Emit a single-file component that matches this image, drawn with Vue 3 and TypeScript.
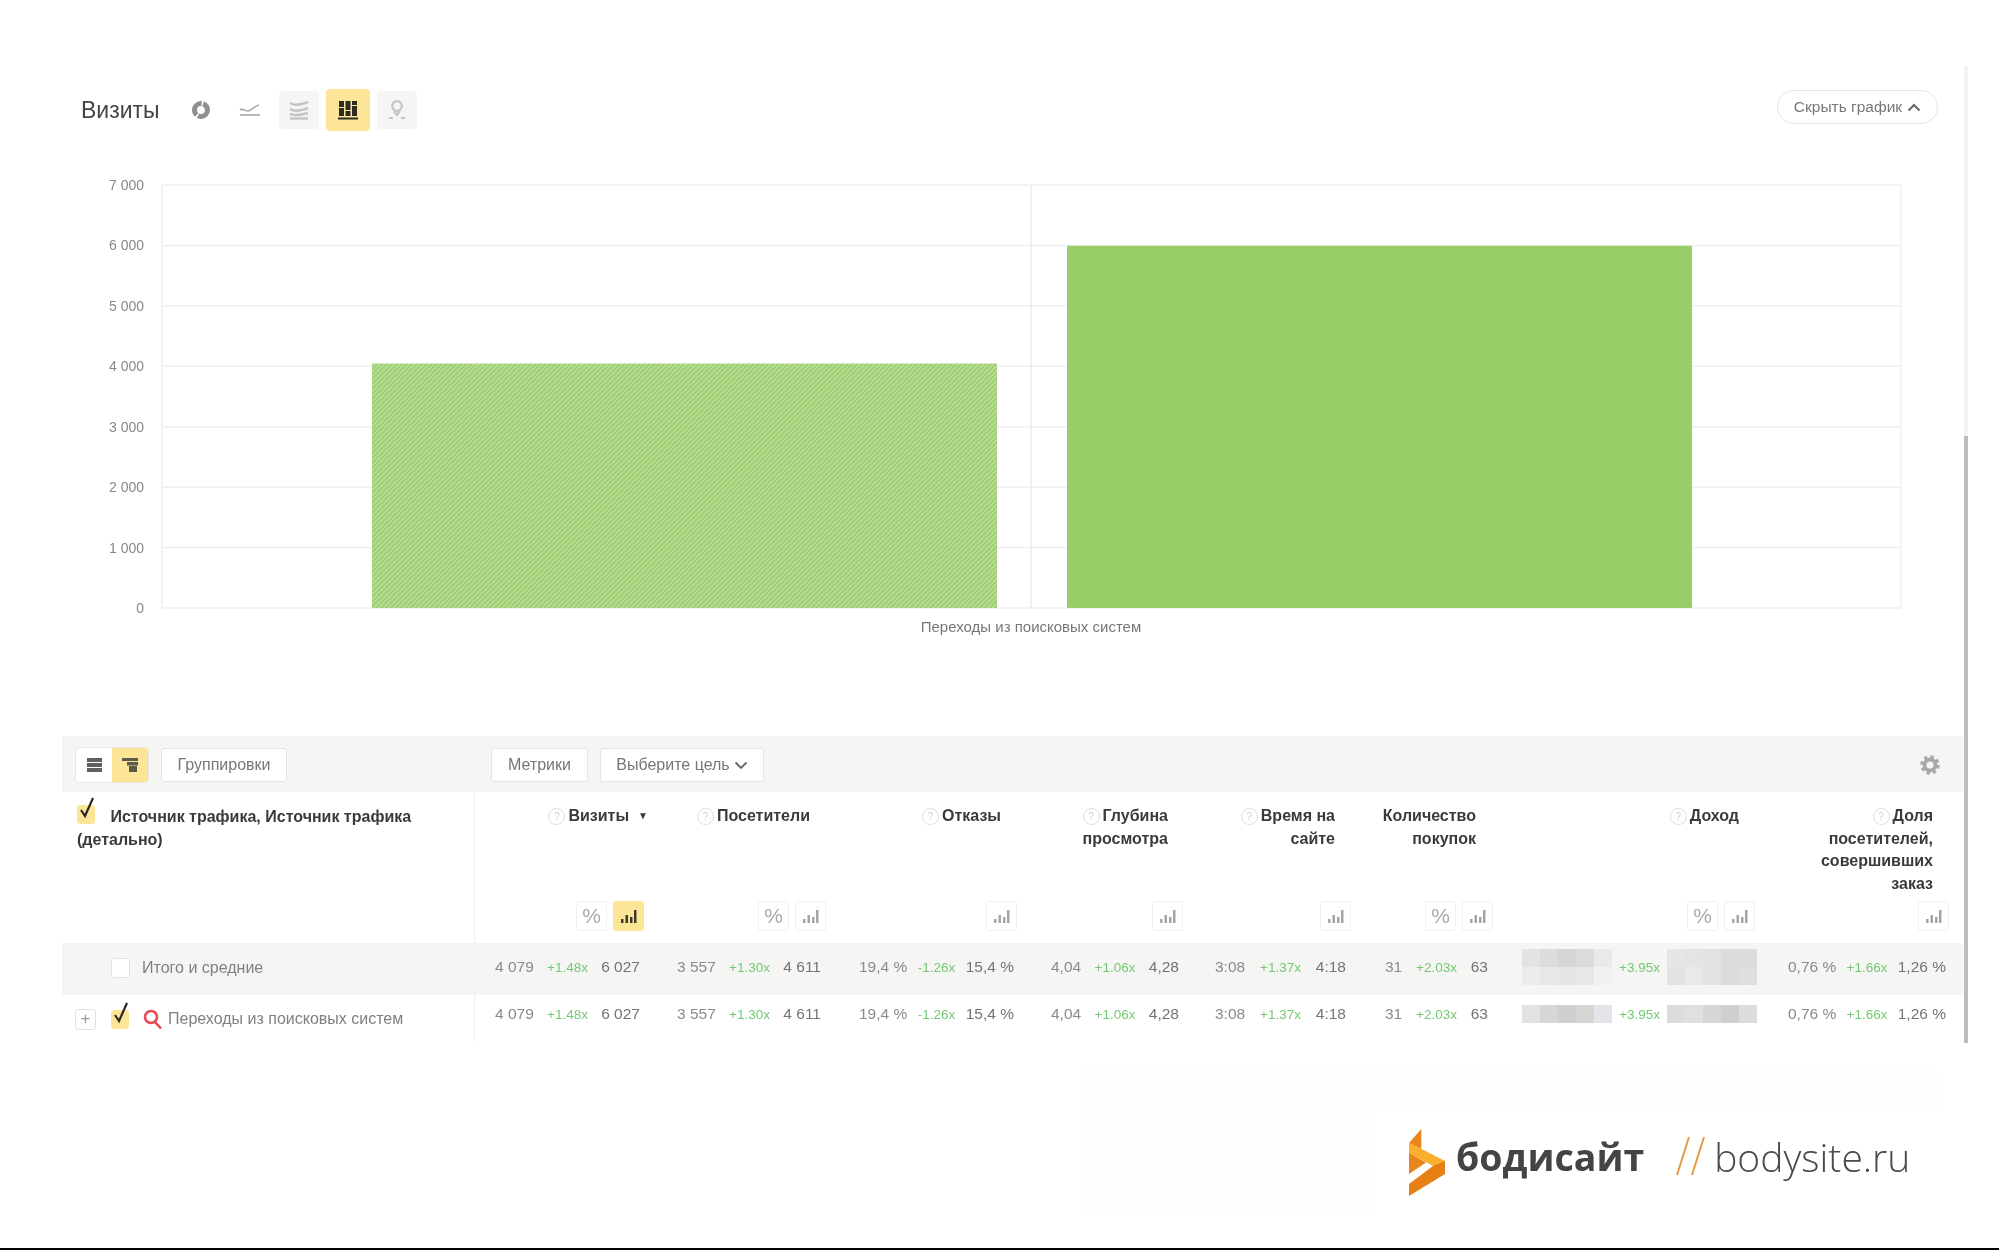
<script setup lang="ts">
interface Metric {
  lines: string[]
  hint: boolean
  sorted?: boolean
  percent: boolean
  active?: boolean
  titlePad: number
  btnPad: number
  padL: number
  padR: number
  from: string
  delta: string
  to: string
  mosaic?: boolean
}

const ticks = [7000, 6000, 5000, 4000, 3000, 2000, 1000, 0]
const tickStep = 60.43
const zeroY = 608

const yOf = (v: number) => zeroY - (v / 1000) * tickStep
const barY = (v: number) => yOf(v) + 2
const fmt = (v: number) => (v >= 1000 ? `${Math.floor(v / 1000)} 000` : '0')

const metrics: Metric[] = [
  { lines: ['Визиты'], hint: true, sorted: true, percent: true, active: true, titlePad: 2, btnPad: 6, padL: 20, padR: 10, from: '4 079', delta: '+1.48x', to: '6 027' },
  { lines: ['Посетители'], hint: true, percent: true, titlePad: 21, btnPad: 5, padL: 27, padR: 10, from: '3 557', delta: '+1.30x', to: '4 611' },
  { lines: ['Отказы'], hint: true, percent: false, titlePad: 23, btnPad: 7, padL: 28, padR: 10, from: '19,4 %', delta: '-1.26x', to: '15,4 %' },
  { lines: ['Глубина', 'просмотра'], hint: true, percent: false, titlePad: 21, btnPad: 6, padL: 27, padR: 10, from: '4,04', delta: '+1.06x', to: '4,28' },
  { lines: ['Время на', 'сайте'], hint: true, percent: false, titlePad: 21, btnPad: 5, padL: 26, padR: 10, from: '3:08', delta: '+1.37x', to: '4:18' },
  { lines: ['Количество', 'покупок'], hint: false, percent: true, titlePad: 22, btnPad: 5, padL: 29, padR: 10, from: '31', delta: '+2.03x', to: '63' },
  { lines: ['Доход'], hint: true, percent: true, titlePad: 28, btnPad: 12, padL: 24, padR: 10, from: '', delta: '+3.95x', to: '', mosaic: true },
  { lines: ['Доля', 'посетителей,', 'совершивших', 'заказ'], hint: true, percent: false, titlePad: 30, btnPad: 14, padL: 21, padR: 17, from: '0,76 %', delta: '+1.66x', to: '1,26 %' },
]

const rows = [
  { total: true, mosaicA: ['#e3e3e3', '#dcdcdc', '#d5d5d5', '#dbdbdb', '#e9e9e9', '#ececec', '#e7e7e7', '#e5e5e5', '#e7e7e7', '#f1f1f1'], mosaicB: ['#e6e6e6', '#e4e4e4', '#e2e2e2', '#dcdcdc', '#dddddd', '#e2e2e2', '#e9e9e9', '#e3e3e3', '#dcdcdc', '#dedede'] },
  { total: false, mosaicA: ['#e2e2e2', '#d6d6d6', '#cfcfcf', '#d5d5d5', '#e4e4ea'], mosaicB: ['#dcdcdc', '#e0e0e0', '#d6d6d6', '#cfcfcf', '#dddddd'] },
]
</script>

<template>
  <div class="page">
    <header class="head">
      <h1 class="title">Визиты</h1>
      <span class="chart-type">
        <svg width="20" height="20" viewBox="0 0 20 20"><circle cx="10" cy="10" r="6.5" fill="none" stroke="#8f8f8f" stroke-width="5" stroke-dasharray="13 1.5 16 1.5 9 1" /></svg>
      </span>
      <span class="chart-type">
        <svg width="22" height="16" viewBox="0 0 22 16" fill="none" stroke="#a8a8a8" stroke-width="1.6"><path d="M1 8c3-2 5 1 8 1s6-5 11-6" /><path d="M1 13h20" /></svg>
      </span>
      <span class="chart-type boxed">
        <svg width="20" height="20" viewBox="0 0 20 20" fill="none" stroke="#c4c4c4" stroke-width="2.4"><path d="M1 3c4 2 7 3 18-1" /><path d="M1 9c4 2 7 3 18-1" /><path d="M1 14c4 1 7 2 18-1" /><path d="M1 18.500h18" /></svg>
      </span>
      <span class="chart-type boxed on">
        <svg width="20" height="20" viewBox="0 0 20 20" fill="#2b2b20"><rect x="1" y="1" width="5" height="6" /><rect x="1" y="8" width="5" height="8" /><rect x="7.500" y="1" width="5" height="9" /><rect x="7.500" y="11" width="5" height="5" /><rect x="14" y="1" width="5" height="4" /><rect x="14" y="6" width="5" height="10" /><rect y="17.500" width="20" height="2" /></svg>
      </span>
      <span class="chart-type boxed">
        <svg width="20" height="22" viewBox="0 0 20 22" fill="none" stroke="#c4c4c4" stroke-width="2.2"><circle cx="10" cy="7" r="4.800" /><path d="M7 12l3 4 3-4" /><path d="M2 19h4M14 19h4" /></svg>
      </span>
      <button class="hide-btn">
        Скрыть график
        <svg width="14" height="9" viewBox="0 0 14 9" fill="none" stroke="#666" stroke-width="2"><path d="M1.500 7.500L7 2l5.500 5.500" /></svg>
      </button>
    </header>

    <svg class="chart" width="1999" height="605" viewBox="0 131 1999 605">
      <defs>
        <pattern id="hatch" width="3.500" height="3.500" patternUnits="userSpaceOnUse" patternTransform="rotate(45)">
          <rect width="3.500" height="3.500" fill="#9ccd6f" />
          <rect width="1.750" height="3.500" fill="#b8dd96" />
        </pattern>
      </defs>
      <g v-for="t in ticks" :key="t">
        <line x1="162" x2="1901" :y1="yOf(t)" :y2="yOf(t)" stroke="#efefef" stroke-width="1.500" />
        <text x="144" :y="yOf(t) + 5" text-anchor="end" class="tick">{{ fmt(t) }}</text>
      </g>
      <line x1="162" x2="162" y1="185" y2="608" stroke="#efefef" stroke-width="1.500" />
      <line x1="1901" x2="1901" y1="185" y2="608" stroke="#efefef" stroke-width="1.500" />
      <line x1="1031" x2="1031" y1="185" y2="608" stroke="#ececec" stroke-width="1.500" />
      <rect x="372" :y="barY(4079)" width="625" :height="zeroY - barY(4079)" fill="url(#hatch)" />
      <rect x="1067" :y="barY(6027)" width="625" :height="zeroY - barY(6027)" fill="#98cd67" />
      <text x="1031" y="632" text-anchor="middle" class="axis-name">Переходы из поисковых систем</text>
    </svg>

    <section class="table">
      <div class="grid toolbar">
        <div class="cell-first tools">
          <div class="toggle">
            <span class="toggle-btn">
              <svg width="15" height="14" viewBox="0 0 15 14" fill="#606060"><rect width="15" height="4" /><rect y="5" width="15" height="4" /><rect y="10" width="15" height="4" /></svg>
            </span>
            <span class="toggle-btn on">
              <svg width="16" height="14" viewBox="0 0 16 14" fill="#5c5a48"><rect width="16" height="3" /><rect x="5" y="4" width="11" height="3.500" /><rect x="7" y="8" width="8" height="6" /></svg>
            </span>
          </div>
          <button class="tool-btn group-btn">Группировки</button>
        </div>
        <div class="tools-right">
          <button class="tool-btn metric-btn">Метрики</button>
          <button class="tool-btn goal-btn">
            Выберите цель
            <svg width="14" height="9" viewBox="0 0 14 9" fill="none" stroke="#666" stroke-width="1.800"><path d="M1.500 1.500L7 7l5.500-5.500" /></svg>
          </button>
          <svg class="gear" width="22" height="22" viewBox="0 0 22 22">
            <circle cx="11" cy="11" r="5.500" fill="none" stroke="#a9a9a9" stroke-width="4" />
            <circle cx="11" cy="11" r="8" fill="none" stroke="#a9a9a9" stroke-width="3.500" stroke-dasharray="3.300 3" />
          </svg>
        </div>
      </div>

      <div class="grid thead">
        <div class="cell-first th-first">
          <span class="check checked head-check">
            <svg class="tick-mark" width="16" height="22" viewBox="0 0 16 22" fill="none" stroke="#2a2a1c" stroke-width="2.200"><path d="M2 13l4 6L14 1" /></svg>
          </span>
          Источник трафика, Источник трафика (детально)
        </div>
        <div v-for="m in metrics" :key="m.lines[0]" class="th">
          <div class="th-title" :style="{ paddingRight: m.titlePad + 'px' }">
            <span v-for="(line, i) in m.lines" :key="line" class="th-line">
              <i v-if="m.hint && i === 0" class="hint">?</i>{{ line }}<b v-if="m.sorted" class="sort">▼</b>
            </span>
          </div>
          <div class="mini-row" :style="{ paddingRight: m.btnPad + 'px' }">
            <span v-if="m.percent" class="mini pct">%</span>
            <span class="mini" :class="{ on: m.active }">
              <svg width="16" height="14" viewBox="0 0 16 14" :fill="m.active ? '#3c3c28' : '#a5a5a5'"><rect y="10" width="2.500" height="4" /><rect x="4.500" y="6" width="2.500" height="8" /><rect x="9" y="8" width="2.500" height="6" /><rect x="13" y="1" width="2.500" height="13" /></svg>
            </span>
          </div>
        </div>
      </div>

      <div v-for="row in rows" :key="String(row.total)" class="grid row" :class="{ total: row.total }">
        <div class="cell-first name">
          <span v-if="!row.total" class="plus">+</span>
          <span class="check" :class="{ checked: !row.total }">
            <svg v-if="!row.total" class="tick-mark" width="16" height="22" viewBox="0 0 16 22" fill="none" stroke="#2a2a1c" stroke-width="2.200"><path d="M2 13l4 6L14 1" /></svg>
          </span>
          <svg v-if="!row.total" class="lens" width="20" height="21" viewBox="0 0 20 21" fill="none" stroke="#e5484d" stroke-width="2.500"><circle cx="8" cy="8" r="6" /><path d="M12 13l6 6.500" /></svg>
          <span class="name-text">{{ row.total ? 'Итого и средние' : 'Переходы из поисковых систем' }}</span>
        </div>
        <div v-for="m in metrics" :key="m.lines[0]" class="td" :style="{ paddingLeft: m.padL + 'px', paddingRight: m.padR + 'px' }">
          <template v-if="m.mosaic">
            <span class="mosaic" :class="{ single: !row.total }"><i v-for="(c, i) in row.mosaicA" :key="i" :style="{ background: c }"></i></span>
            <span class="delta">{{ m.delta }}</span>
            <span class="mosaic" :class="{ single: !row.total }"><i v-for="(c, i) in row.mosaicB" :key="i" :style="{ background: c }"></i></span>
          </template>
          <template v-else>
            <span class="val">{{ m.from }}</span>
            <span class="delta">{{ m.delta }}</span>
            <span class="val dark">{{ m.to }}</span>
          </template>
        </div>
      </div>
    </section>

    <footer class="footer">
      <div class="logo">
        <svg class="logo-mark" width="36" height="67" viewBox="0 0 36 67">
          <path d="M0 14L12.300 0v20L0 14z" fill="#e8851c" />
          <path d="M0 23.500l17 10L0 45z" fill="#e8851c" />
          <path d="M0 13.500l36 18.500v13L24 37 0 23.500z" fill="#fbb02d" />
          <path d="M36 32v13L0 67V55l24-18z" fill="#e67f14" />
        </svg>
        <span class="logo-ru">бодисайт</span>
        <svg class="slashes" width="32" height="40" viewBox="0 0 32 40" fill="none" stroke="#e59a45" stroke-width="2"><path d="M14 1L2 39M29 1L17 39" /></svg>
        <span class="logo-en">bodysite.ru</span>
      </div>
    </footer>

    <div class="scroll-track"><div class="scroll-thumb"></div></div>
    <div class="edge"></div>
  </div>
</template>

<style>
html,
body {
  margin: 0;
  background: #fff;
}
</style>

<style scoped>
.page {
  position: relative;
  width: 1999px;
  height: 1250px;
  box-sizing: border-box;
  padding-top: 89px;
  overflow: hidden;
  background: #fff;
  font-family: "Liberation Sans", Arial, sans-serif;
  filter: blur(0.7px);
}

.head {
  display: flex;
  align-items: center;
  height: 42px;
  padding: 0 61px 0 81px;
}

.title {
  width: 107px;
  margin: 0;
  font-size: 23px;
  font-weight: 400;
  color: #444;
}

.chart-type {
  display: flex;
  align-items: center;
  justify-content: center;
  width: 40px;
  height: 38px;
  margin-right: 9px;
  border-radius: 4px;
}

.chart-type:first-of-type {
  margin-left: -7px;
}

.chart-type.boxed {
  background: #f5f5f5;
  margin-right: 7px;
}

.chart-type.on {
  width: 44px;
  height: 42px;
  background: #fde598;
}

.hide-btn {
  display: flex;
  align-items: center;
  justify-content: center;
  gap: 5px;
  width: 161px;
  height: 34px;
  margin: -6px 0 0 auto;
  padding: 0;
  border: 1px solid #e6e6e6;
  border-radius: 17px;
  background: #fff;
  font: 15.500px "Liberation Sans", Arial, sans-serif;
  color: #777;
}

.chart {
  display: block;
}

.tick {
  font-size: 14px;
  fill: #888;
}

.axis-name {
  font-size: 15px;
  fill: #777;
}

.table {
  margin-left: 62px;
  width: 1901px;
}

.grid {
  display: grid;
  grid-template-columns: 413px 175px 181px 193px 165px 167px 142px 269px 196px;
}

.toolbar {
  box-sizing: border-box;
  height: 56px;
  background: #f5f5f3;
}

.cell-first {
  box-sizing: border-box;
  border-right: 1px solid #f1f1f1;
}

.tools {
  display: flex;
  align-items: center;
  gap: 12px;
  padding: 2px 0 0 13px;
}

.tools-right {
  grid-column: 2 / -1;
  display: flex;
  align-items: center;
  gap: 12px;
  padding: 2px 0 0 16px;
}

.toggle {
  display: flex;
  height: 34px;
  border: 1px solid #e7e7e7;
  border-radius: 4px;
  overflow: hidden;
}

.toggle-btn {
  display: flex;
  align-items: center;
  justify-content: center;
  width: 36px;
  background: #fff;
}

.toggle-btn.on {
  background: #fde598;
}

.tool-btn {
  display: flex;
  align-items: center;
  justify-content: center;
  gap: 4px;
  height: 34px;
  padding: 0;
  border: 1px solid #e5e5e5;
  border-radius: 3px;
  background: #fff;
  font: 16px "Liberation Sans", Arial, sans-serif;
  color: #777;
}

.group-btn {
  width: 126px;
}

.metric-btn {
  width: 97px;
}

.goal-btn {
  width: 164px;
}

.gear {
  margin-left: auto;
  margin-right: 22px;
}

.thead {
  height: 151px;
}

.th-first {
  padding: 13px 20px 0 15px;
  font-size: 16px;
  font-weight: 700;
  line-height: 22.600px;
  color: #3a3a3a;
}

.head-check {
  margin-right: 11px;
  vertical-align: -2px;
}

.th {
  display: flex;
  flex-direction: column;
  justify-content: space-between;
  padding: 13px 0 12px;
  text-align: right;
  font-size: 16px;
  font-weight: 700;
  line-height: 22.600px;
  color: #3a3a3a;
}

.th-line {
  display: block;
}

.hint {
  display: inline-block;
  width: 15px;
  height: 15px;
  margin-right: 3px;
  border: 1px solid #dedede;
  border-radius: 50%;
  font-size: 10px;
  font-style: normal;
  font-weight: 400;
  line-height: 15px;
  text-align: center;
  color: #d0d0d0;
  vertical-align: 1px;
}

.sort {
  margin-left: 9px;
  font-size: 10px;
  vertical-align: 2px;
}

.mini-row {
  display: flex;
  justify-content: flex-end;
  gap: 6px;
}

.mini {
  display: flex;
  align-items: center;
  justify-content: center;
  box-sizing: border-box;
  width: 31px;
  height: 30px;
  border: 1px solid #f1f1f1;
  border-radius: 3px;
  background: #fff;
}

.mini.pct {
  font-size: 21px;
  font-weight: 400;
  color: #a8a8a8;
}

.mini.on {
  background: #fde598;
  border-color: #fde598;
}

.row {
  height: 52px;
  align-items: stretch;
}

.row + .row {
  height: 48px;
}

.row.total {
  background: #f5f5f3;
}

.name {
  position: relative;
  display: flex;
  align-items: center;
  padding-left: 49px;
  padding-bottom: 3px;
  font-size: 16px;
  color: #808080;
}

.row + .row .name {
  padding-left: 13px;
  padding-bottom: 0;
}

.plus {
  display: flex;
  align-items: center;
  justify-content: center;
  box-sizing: border-box;
  width: 21px;
  height: 21px;
  margin-right: 15px;
  border: 1px solid #e2e2e2;
  border-radius: 3px;
  font-size: 17px;
  color: #999;
}

.check {
  position: relative;
  display: inline-block;
  box-sizing: border-box;
  width: 18px;
  height: 19px;
  border: 1px solid #e2e2e2;
  border-radius: 3px;
  background: #fff;
}

.row.total .check {
  width: 19px;
  height: 20px;
}

.check.checked {
  border-color: #fde598;
  background: #fde598;
}

.tick-mark {
  position: absolute;
  left: 1px;
  top: -9px;
}

.lens {
  margin-left: 14px;
  flex: none;
}

.row.total .name-text {
  margin-left: 12px;
}

.row + .row .name-text {
  margin-left: 5px;
}

.td {
  display: flex;
  align-items: center;
  justify-content: space-between;
  box-sizing: border-box;
  padding-bottom: 4px;
  font-size: 15.500px;
  color: #8a8a8a;
}

.row + .row .td {
  padding-bottom: 10px;
}

.val.dark {
  color: #747474;
}

.delta {
  font-size: 13.500px;
  color: #74c874;
}

.mosaic {
  display: grid;
  grid-template-columns: repeat(5, 18px);
  grid-auto-rows: 18px;
}

.mosaic i {
  display: block;
}

.footer {
  width: 854px;
  height: 180px;
  margin: 25px 0 0 1084px;
  background: linear-gradient(#fffdfd 149px, #fff 149px);
}

.logo {
  position: relative;
  display: flex;
  align-items: center;
  width: 628px;
  height: 135px;
  margin-left: 287px;
  transform: translateY(45px);
  padding: 0 0 49px 38px;
  box-sizing: border-box;
  background: #fff;
}

.logo-mark {
  margin-top: 13px;
}

.logo-ru {
  margin-left: 11px;
  font-family: "Open Sans", sans-serif;
  font-size: 37.500px;
  font-weight: 700;
  color: #444;
}

.slashes {
  margin-left: 31px;
}

.logo-en {
  margin-left: 7px;
  font-family: "Open Sans", sans-serif;
  font-size: 39px;
  font-weight: 300;
  color: #4a4a4a;
}

.scroll-track {
  position: absolute;
  left: 1964px;
  top: 66px;
  width: 4px;
  height: 977px;
  background: #f3f3f3;
}

.scroll-thumb {
  width: 100%;
  height: 607px;
  margin-top: 370px;
  background: #bdbdbd;
}

.edge {
  position: absolute;
  left: 0;
  right: 0;
  bottom: 0;
  height: 2px;
  background: #000;
}
</style>
